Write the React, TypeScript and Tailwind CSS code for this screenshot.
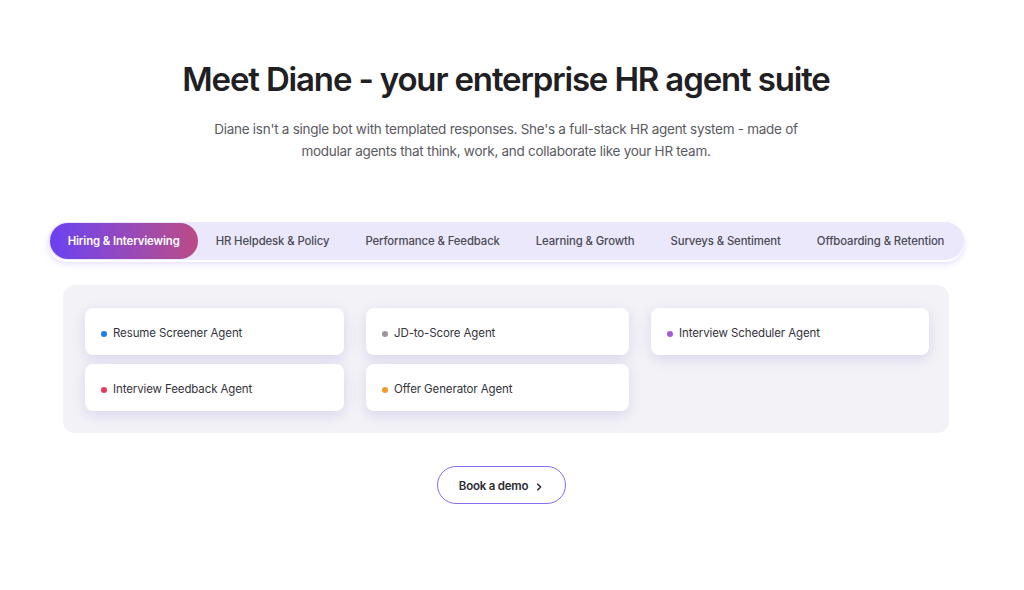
import React from "react";

const tabs = [
  "Hiring & Interviewing",
  "HR Helpdesk & Policy",
  "Performance & Feedback",
  "Learning & Growth",
  "Surveys & Sentiment",
  "Offboarding & Retention",
];

const cards = [
  { label: "Resume Screener Agent", color: "#1a7cf5" },
  { label: "JD-to-Score Agent", color: "#9b939e" },
  { label: "Interview Scheduler Agent", color: "#a85ad6" },
  { label: "Interview Feedback Agent", color: "#f0375a" },
  { label: "Offer Generator Agent", color: "#f29a2c" },
];

export default function App() {
  return (
    <div
      className="w-[1012px] min-h-[590px] bg-white flex flex-col items-center pt-[60px]"
      style={{ fontFamily: "Inter, 'Noto Sans', sans-serif" }}
    >
      <h1 className="text-[33px] leading-[38px] font-semibold tracking-[-0.035em] text-[#1f1f24]">
        Meet Diane - your enterprise HR agent suite
      </h1>
      <p className="mt-[20px] text-[13.5px] leading-[22px] text-[#5a5a62] text-center w-[600px] tracking-[-0.02em]">
        Diane isn't a single bot with templated responses. She's a full-stack HR agent system - made of
        modular agents that think, work, and collaborate like your HR team.
      </p>

      <div className="mt-[60px] flex items-center rounded-full bg-[#ebe8fb] px-[2px] py-[1px] shadow-[0_2px_0_#ffffff,0_4px_6px_rgba(190,180,240,0.45)]">
        {tabs.map((t, i) => (
          <div
            key={t}
            className={
              i === 0
                ? "h-[36px] flex items-center pt-[2px] px-[18px] rounded-full bg-gradient-to-r from-[#6a3ff2] via-[#9548bd] to-[#bb4a85] text-white text-[11.35px] font-semibold tracking-[-0.01em]"
                : "h-[36px] flex items-center pt-[2px] px-[18px] rounded-full text-[#4a4a55] text-[11.35px] font-medium tracking-[-0.01em]"
            }
          >
            {t}
          </div>
        ))}
      </div>

      <div className="mt-[25px] w-[886px] rounded-[12px] bg-[#f3f3f7] pt-[23px] pb-[22px] pl-[22px] pr-[19px]">
        <div className="grid grid-cols-[259px_263px_278px] gap-x-[22px] gap-y-[9px]">
          {cards.map((c) => (
            <div
              key={c.label}
              className="h-[47px] rounded-[8px] bg-white flex items-center pt-[4px] pl-[16px] gap-[6px] shadow-[0_4px_14px_rgba(205,203,232,0.75)]"
            >
              <span className="w-[6px] h-[6px] rounded-full" style={{ backgroundColor: c.color }} />
              <span className="text-[11.5px] text-[#34343c] tracking-[-0.01em]">{c.label}</span>
            </div>
          ))}
        </div>
      </div>

      <button className="mt-[33px] mr-[10px] h-[38px] w-[129px] pt-[3px] rounded-full border border-[#8a6cf2] bg-white flex items-center justify-center gap-[7px] text-[11.5px] font-semibold text-[#2c2c34] tracking-[-0.02em]">
        Book a demo
        <svg width="8" height="8" viewBox="0 0 10 10" fill="none">
          <path d="M3.5 1.5 L7 5 L3.5 8.5" stroke="#2c2c34" strokeWidth="2" strokeLinecap="round" strokeLinejoin="round" />
        </svg>
      </button>
    </div>
  );
}
